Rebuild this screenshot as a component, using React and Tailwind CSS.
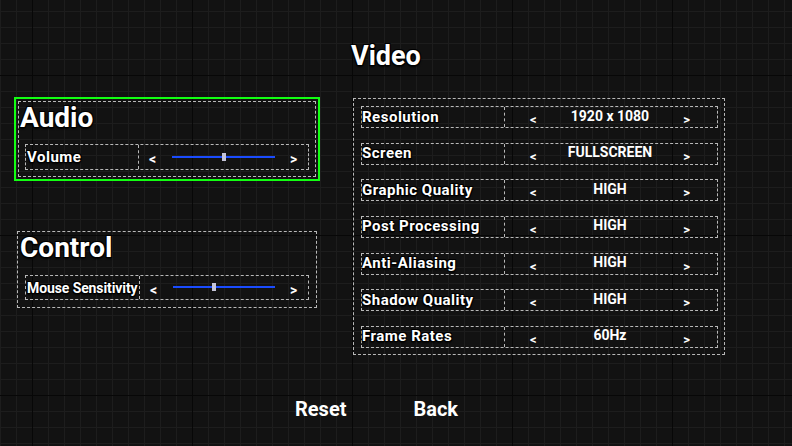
const outline =
  "[text-shadow:1px_1px_0_#000,-1px_-1px_0_#000,1px_-1px_0_#000,-1px_1px_0_#000,0_2px_2px_#000]";
const dash = "border border-dashed border-[#b8b8b8]";

const videoRows = [
  { label: "Resolution", value: "1920 x 1080" },
  { label: "Screen", value: "FULLSCREEN" },
  { label: "Graphic Quality", value: "HIGH" },
  { label: "Post Processing", value: "HIGH" },
  { label: "Anti-Aliasing", value: "HIGH" },
  { label: "Shadow Quality", value: "HIGH" },
  { label: "Frame Rates", value: "60Hz" },
];

const SliderRow = ({ label, labelW, labelCls, pos, h, lineTop }) => (
  <div className={`flex w-[284px] ${h} ${dash}`}>
    <div
      className={`${labelW} ${labelCls} shrink-0 whitespace-nowrap border-r border-dashed border-[#b8b8b8] flex items-center pl-[1px] font-bold leading-none ${outline}`}
    >
      {label}
    </div>
    <div className="flex-1 flex items-center pl-[10px] pr-[10px] text-[14px] font-bold leading-none">
      <span className="w-[8px] relative top-[2px]">&lt;</span>
      <div className={`relative flex-1 mx-[15px] h-[2px] self-start bg-[#1a4cff] ${lineTop}`}>
        <div
          className="absolute top-[-3px] w-[4px] h-[8px] bg-[#c4c4d8] -ml-[2px]"
          style={{ left: `${pos * 100}%` }}
        />
      </div>
      <span className="w-[8px] relative top-[2px]">&gt;</span>
    </div>
  </div>
);

const VideoRow = ({ label, value }) => (
  <div className={`flex w-[357px] h-[22px] ${dash}`}>
    <div
      className={`w-[143px] shrink-0 whitespace-nowrap border-r border-dashed border-[#b8b8b8] flex items-center text-[15px] font-bold leading-none tracking-[0.5px] ${outline}`}
    >
      {label}
    </div>
    <div className="flex-1 grid grid-cols-[auto_1fr_auto] pl-[25px] pr-[27px]">
      <span className="self-end text-[13px] font-bold leading-none pb-[1px]">&lt;</span>
      <span className="self-center -mt-[3px] text-center text-[14px] font-bold leading-none">
        {value}
      </span>
      <span className="self-end text-[13px] font-bold leading-none pb-[1px]">&gt;</span>
    </div>
  </div>
);

export default function App() {
  return (
    <div
      className="w-[792px] h-[446px] overflow-hidden flex flex-col text-white font-['Roboto',sans-serif] bg-[#121212] [background-image:linear-gradient(to_right,#070707_1px,transparent_1px),linear-gradient(to_bottom,#070707_1px,transparent_1px),linear-gradient(to_right,#1d1d1d_1px,transparent_1px),linear-gradient(to_bottom,#1d1d1d_1px,transparent_1px)] [background-size:160px_160px,160px_160px,16px_16px,16px_16px] [background-position:32px_75px,32px_75px,0_11px,0_11px]"
    >
      <div className="h-[97px] shrink-0 pt-[40px] pl-[351px]">
        <h1 className={`text-[27px] font-bold leading-[32px] ${outline}`}>Video</h1>
      </div>

      <div className="flex items-start">
        <div className="ml-[14px] w-[306px] flex flex-col">
          {/* Audio */}
          <div className="border-2 border-[#12ff12] p-[2px]">
            <div className={`${dash} flex flex-col pb-[6px]`}>
              <h2 className={`pl-[1px] text-[28px] font-bold leading-[32px] ${outline}`}>Audio</h2>
              <div className="mt-[10px] ml-[6px]">
                <SliderRow
                  label="Volume"
                  labelW="w-[113px]"
                  labelCls="text-[15px] tracking-[0.5px]"
                  pos={0.5}
                  h="h-[26px]"
                  lineTop="mt-[11px]"
                />
              </div>
            </div>
          </div>

          {/* Control */}
          <div className={`mt-[50px] ml-[3px] w-[300px] ${dash} flex flex-col pb-[7px]`}>
            <h2 className={`pl-[2px] text-[28px] font-bold leading-[32px] ${outline}`}>Control</h2>
            <div className="mt-[11px] ml-[7px]">
              <SliderRow
                label="Mouse Sensitivity"
                labelW="w-[114px]"
                labelCls="text-[14px] tracking-[-0.1px]"
                pos={0.4}
                h="h-[25px]"
                lineTop="mt-[10px]"
              />
            </div>
          </div>
        </div>

        {/* Video */}
        <div className={`ml-[33px] mt-[1px] w-[372px] h-[257px] ${dash} flex flex-col gap-[14.67px] pt-[7px] pl-[7px]`}>
          {videoRows.map((r) => (
            <VideoRow key={r.label} label={r.label} value={r.value} />
          ))}
        </div>
      </div>

      <div className={`flex mt-[42px] pl-[295px] gap-[67px] text-[20px] font-bold leading-[24px] ${outline}`}>
        <button>Reset</button>
        <button>Back</button>
      </div>
    </div>
  );
}
